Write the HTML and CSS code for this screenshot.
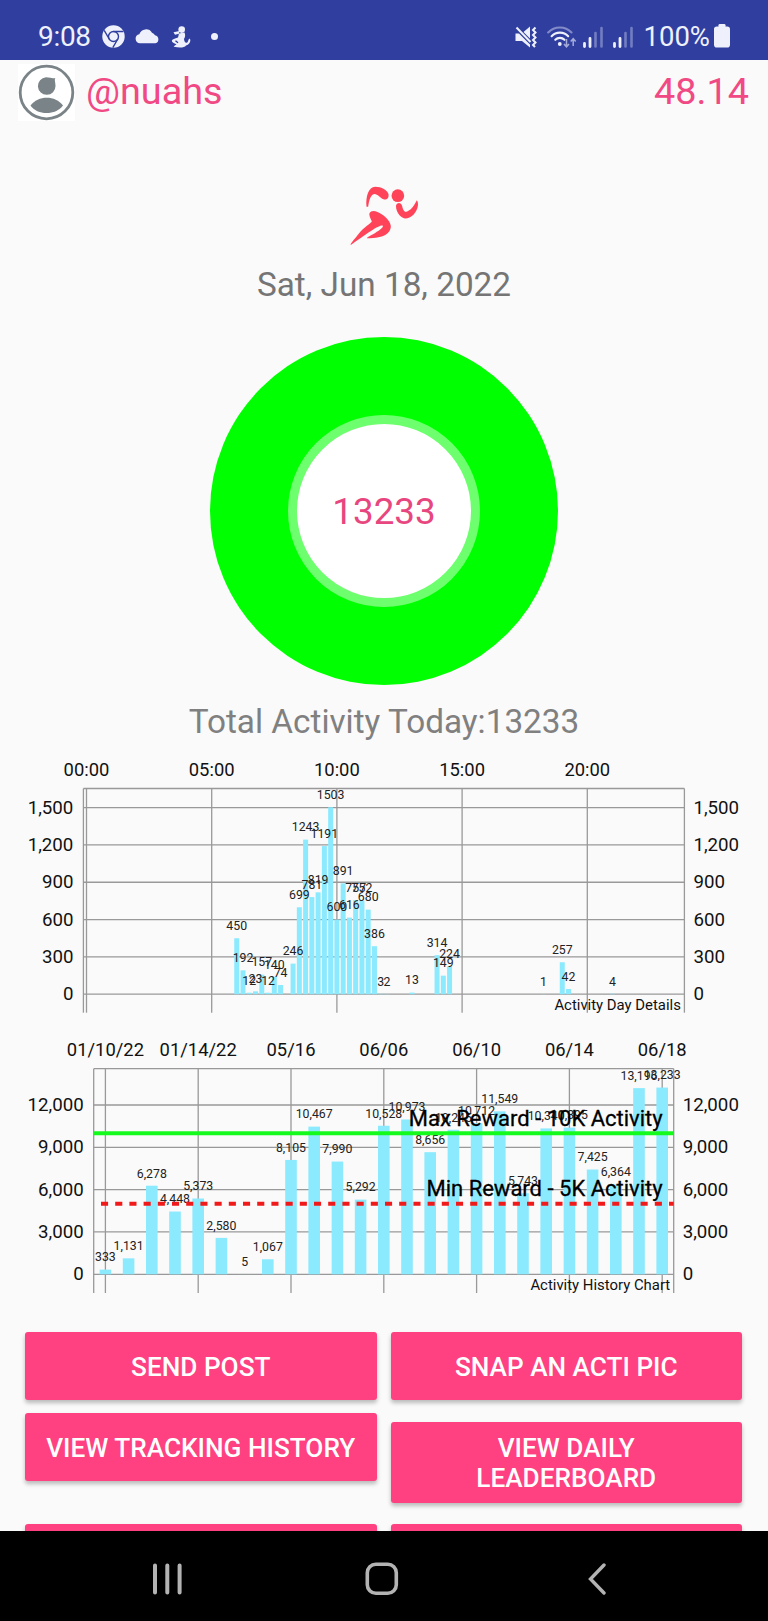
FILE: index.html
```
<!DOCTYPE html>
<html lang="en">
<head>
  <meta charset="UTF-8" />
  <meta name="viewport" content="width=device-width, initial-scale=1.0" />
  <title>Activity Tracker</title>
  <link rel="stylesheet" href="styles.css">
</head>
<body>

  <!-- Status bar -->
  <div class="status-bar">
    <div class="status-left">
      <span class="time">9:08</span>
      <svg class="chrome" width="23" height="23" viewBox="0 0 23 23">
        <circle cx="11.5" cy="11.5" r="11.2" fill="#eef1fb"/>
        <g fill="none" stroke="#303f9f" stroke-width="1.4">
          <circle cx="11.5" cy="11.5" r="5"/>
          <path d="M11.5 6.5H21.5M7.2 14L2.2 5.4M15.8 14L10.8 22.6"/>
        </g>
      </svg>
      <svg class="cloud" width="25" height="15" viewBox="0 0 25 15">
        <path d="M5 14.3A4.6 4.6 0 0 1 4.3 5.2A7 7 0 0 1 17 3.8A5.6 5.6 0 0 1 20 6.2A4.2 4.2 0 0 1 20.5 14.3Z" fill="#eef1fb"/>
      </svg>
      <svg class="fitness" width="20" height="22" viewBox="0 0 20 22">
        <g fill="#eef1fb">
          <circle cx="10.7" cy="3.6" r="3.3"/>
          <path d="M8 7.5L13.5 6.5C14.5 9 14.3 11 13 13C13.2 15.5 14.5 17.5 16.3 16.5C17.5 15.5 17 13 18.8 12.5C20.3 15 18.5 18.5 15 19.5C13.5 22 8 22 3 20.8C2 20 5 19.2 5.5 18.2C3 17.5 .8 16.2 .8 14.8C1 13.5 4 12.3 7 11.5Z"/>
          <path d="M2.5 6.2L8.5 5L8 7.8L4 8.8Z"/>
        </g>
        <path d="M4.5 14.7L7 16.8" stroke="#303f9f" stroke-width="1.4"/>
      </svg>
      <span class="dot"></span>
    </div>
    <div class="status-right">
      <svg class="mute" width="22" height="22" viewBox="0 0 22 22">
        <path d="M.5 7.5H4L15 18.5V21.5L7 15H.5ZM8.500 6L15 .5V12.5Z" fill="#eef1fb"/>
        <path d="M1.5 1.5L15.5 16" stroke="#eef1fb" stroke-width="2"/>
        <path d="M20.5 1.5L18 4L20.5 6.5L18 9L20.5 11.5L18 14L20.5 16.5L18 19L20 21" fill="none" stroke="#eef1fb" stroke-width="2"/>
      </svg>
      <svg class="wifi" width="30" height="22" viewBox="0 0 30 22">
        <g fill="none" stroke-width="2.1" stroke="#eef1fb" stroke-linecap="round">
          <path d="M1.2 6.5A16 16 0 0 1 24.5 6.5" stroke="#828bc8"/>
          <path d="M4.6 10.2A11.5 11.5 0 0 1 21.2 10.2"/>
          <path d="M8.3 13.8A6.5 6.5 0 0 1 17.5 13.8"/>
        </g>
        <circle cx="12.8" cy="18" r="1.9" fill="#eef1fb"/>
        <path d="M19.5 13V20.5M17 18L19.5 20.8L22 18M26.2 20V13M23.7 15.5L26.2 12.7L28.7 15.5" fill="none" stroke="#a4abd9" stroke-width="1.5"/>
      </svg>
      <svg class="signal" width="20" height="22" viewBox="0 0 20 22">
        <path d="M1.5 17.5V20.5M7 12.5V20.5" stroke="#eef1fb" stroke-width="2.8" stroke-linecap="round"/>
        <path d="M12.5 7V20.5M18.5 2V20.5" stroke="#737dc1" stroke-width="2.6" stroke-linecap="round"/>
      </svg>
      <svg class="signal" width="20" height="22" viewBox="0 0 20 22">
        <path d="M1.5 17.5V20.5M7 12.5V20.5" stroke="#eef1fb" stroke-width="2.8" stroke-linecap="round"/>
        <path d="M12.5 7V20.5M18.5 2V20.5" stroke="#737dc1" stroke-width="2.6" stroke-linecap="round"/>
      </svg>
      <span class="battery-text">100%</span>
      <svg class="battery" width="16" height="26" viewBox="0 0 16 26">
        <rect x="4.5" y="0" width="7" height="5" rx="1.2" fill="#eef1fb"/>
        <rect x="0" y="2.5" width="16" height="21" rx="2.8" fill="#eef1fb"/>
      </svg>
    </div>
  </div>

  <div class="container">
    <!-- User -->
    <div class="user-row">
      <svg class="avatar" width="57" height="57" viewBox="0 0 57 57">
        <rect width="57" height="57" fill="#fff"/>
        <circle cx="28.5" cy="28.5" r="26.3" fill="none" stroke="#7a8387" stroke-width="2.8"/>
        <path d="M37.5 14.3C36 15.5 37.5 18 37.5 22A8.8 8.8 0 1 1 28 13.3C31 13.5 35 14.5 37.5 14.3Z" fill="#7a8387"/>
        <path d="M12.5 41.5C20 31 37.5 31 45 41.5C38 51.5 19 51.5 12.5 41.5Z" fill="#7a8387"/>
      </svg>
      <span class="username">@nuahs</span>
      <span class="balance">48.14</span>
    </div>

    <svg class="runner" width="69" height="60" viewBox="330 48 206 180" fill="#ff4459">
      <path d="M379 110C376 80 385 50 405 50C425 50 441 60 445 72C447 86 438 91 430 88C420 84 412 71 402 72C391 75 387 90 384 110Z"/>
      <circle cx="473" cy="77" r="19"/>
      <path d="M468 105C472 96 483 97 486 108C487 115 490 124 496 126C510 124 522 108 530 91C538 100 532 125 515 138C503 148 488 148 478 136C471 127 466 115 468 105Z"/>
      <path d="M388 130C392 121 402 121 412 126C428 133 450 150 452 168C452 188 435 205 381 205C378 203 390 198 405 189C420 180 430 172 428 167C420 163 395 180 332 225C328 224 345 205 355 192C372 170 392 162 395 154C392 146 386 138 388 130Z"/>
    </svg>
    <div class="date">Sat, Jun 18, 2022</div>

    <div class="ring">
      <div class="hole">13233</div>
    </div>
    <div class="total">Total Activity Today:13233</div>

    <svg id="day" class="chart" width="768" height="270"></svg>
    <svg id="history" class="chart" width="768" height="270"></svg>

    <!-- Buttons -->
    <div class="buttons">
      <div class="button-row">
        <button>SEND POST</button>
        <button>SNAP AN ACTI PIC</button>
      </div>
      <div class="button-row">
        <button>VIEW TRACKING HISTORY</button>
        <button>VIEW DAILY<br>LEADERBOARD</button>
      </div>
      <div class="button-row">
        <button></button>
        <button></button>
      </div>
    </div>
  </div>

  <!-- Navigation bar -->
  <div class="nav-bar">
    <svg class="recents" width="30" height="32" viewBox="0 0 30 32">
      <path d="M2 2.5V29.5M14.3 2.5V29.5M26.6 2.5V29.5" stroke="#b3b3b3" stroke-width="4" stroke-linecap="round"/>
    </svg>
    <svg class="home" width="34" height="34" viewBox="0 0 34 34">
      <rect x="2.3" y="2.3" width="29" height="29" rx="8.5" fill="none" stroke="#b3b3b3" stroke-width="3.6"/>
    </svg>
    <svg class="back" width="18" height="32" viewBox="0 0 18 32">
      <path d="M16 2L2.5 16L16 30" fill="none" stroke="#b3b3b3" stroke-width="3.4" stroke-linecap="round"/>
    </svg>
  </div>

  <script src="charts.js"></script>
</body>
</html>
```
FILE: styles.css
```
body {
  font-family: Roboto, sans-serif;
  margin: 0;
  height: 1621px;
  display: flex;
  flex-direction: column;
  overflow: hidden;
  background-color: #fafafa;
}
svg {
  display: block;
  flex-shrink: 0;
}
.status-bar {
  height: 60px;
  flex-shrink: 0;
  box-sizing: border-box;
  padding: 13px 38px 0 38px;
  display: flex;
  justify-content: space-between;
  background-color: #303f9f;
  color: #eef1fb;
}
.status-left, .status-right {
  display: flex;
  align-items: center;
  height: 47px;
}
.time {
  font-size: 28px;
  letter-spacing: -0.3px;
  width: 64px;
}
.cloud {
  margin-left: 10px;
}
.fitness {
  margin-left: 11px;
}
.dot {
  width: 7px;
  height: 7px;
  border-radius: 50%;
  background-color: #eef1fb;
  margin-left: 20px;
}
.wifi {
  margin-left: 10px;
}
.signal {
  margin-left: 6px;
}
.signal + .signal {
  margin-left: 10px;
}
.battery-text {
  font-size: 27.5px;
  margin: 0 4px 0 10px;
}
.container {
  height: 1471px;
  flex-shrink: 0;
  overflow: hidden;
  display: flex;
  flex-direction: column;
  align-items: center;
}
.container > * {
  flex-shrink: 0;
}
.user-row {
  width: 768px;
  height: 64px;
  box-sizing: border-box;
  padding: 1px 19px 0 18px;
  display: flex;
  align-items: center;
  font-size: 37.8px;
  color: #f04983;
}
.username {
  margin-left: 11px;
  padding-bottom: 4px;
}
.balance {
  margin-left: auto;
  padding-bottom: 4px;
}
.runner {
  margin-top: 62px;
}
.date {
  font-size: 33.3px;
  line-height: 38px;
  margin-top: 20px;
  color: #757575;
}
.ring {
  width: 348px;
  height: 348px;
  margin-top: 33px;
  border-radius: 50%;
  background-color: #00ff00;
  display: flex;
  align-items: center;
  justify-content: center;
}
.hole {
  width: 174px;
  height: 174px;
  line-height: 175px;
  border: 9px solid #6eff6e;
  border-radius: 50%;
  background-color: #fff;
  text-align: center;
  font-size: 36.8px;
  color: #e8467e;
}
.total {
  font-size: 33.3px;
  line-height: 38px;
  margin-top: 18px;
  color: #808080;
}
.chart {
  margin-top: 10px;
}
#day {
  margin-top: 9px;
}
.grid {
  stroke: #999;
  stroke-width: 1.3;
}
.bar {
  fill: #8ceaff;
}
.axis {
  font-size: 18.4px;
  fill: #111;
}
.tick {
  font-size: 18.7px;
}
.value {
  font-size: 12.3px;
  fill: #222;
}
.description {
  font-size: 14.9px;
  fill: #111;
}
.limit {
  font-size: 22px;
  fill: #000;
  stroke: #000;
  stroke-width: 0.3;
}
.max-line {
  stroke: #14fa1c;
  stroke-width: 4;
}
.min-line {
  stroke: #f01a1a;
  stroke-width: 4;
  stroke-dasharray: 7.1 7.1;
}
.middle {
  text-anchor: middle;
}
.end {
  text-anchor: end;
}
.buttons {
  width: 717px;
  margin: 32px 1px 0 0;
}
.button-row {
  display: flex;
  align-items: baseline;
  gap: 14px;
  margin-bottom: 13px;
}
.button-row:nth-child(2) {
  margin-bottom: 21px;
}
button {
  flex: 1 1 0;
  min-height: 68px;
  padding: 11px 0 9px;
  border: none;
  border-radius: 3px;
  background-color: #ff4081;
  color: #fff;
  font-family: Roboto, sans-serif;
  font-size: 26.2px;
  font-weight: 500;
  line-height: 30.5px;
  box-shadow: 0 3px 4px rgba(0, 0, 0, 0.26);
}
.nav-bar {
  height: 90px;
  flex-shrink: 0;
  box-sizing: border-box;
  background-color: #000;
  display: flex;
  align-items: center;
  padding: 5px 0 0 153px;
}
.home {
  margin-left: 182px;
}
.back {
  margin-left: 189px;
}
```
FILE: charts.js
```
const day = {
  id: "day",
  left: 83.4, right: 684.4, top: 38.5, bottom: 262.7, zero: 244.2,
  first: 86.5, step: 6.26, barWidth: 5, unit: 0.12437,
  ticks: [0, 300, 600, 900, 1200, 1500],
  labels: { 0: "00:00", 20: "05:00", 40: "10:00", 60: "15:00", 80: "20:00" },
  values: {
    24: 450, 25: 192, 26: 12, 27: 23, 28: 157, 29: 12, 30: 140, 31: 74,
    33: 246, 34: 699, 35: 1243, 36: 781, 37: 819, 38: 1191, 39: 1503,
    40: 600, 41: 891, 42: 616, 43: 757, 44: 752, 45: 680, 46: 386, 47: 3, 48: 2,
    52: 13, 56: 314, 57: 149, 58: 224, 73: 1, 76: 257, 77: 42, 84: 4
  },
  format: (v) => v,
  description: "Activity Day Details"
}

const history1 = {
  id: "history",
  left: 93.7, right: 673.7, top: 38.7, bottom: 263, zero: 244.3,
  first: 105.4, step: 23.2, barWidth: 11.6, unit: 0.01411,
  ticks: [0, 3000, 6000, 9000, 12000],
  labels: { 0: "01/10/22", 4: "01/14/22", 8: "05/16", 12: "06/06", 16: "06/10", 20: "06/14", 24: "06/18" },
  values: Object.assign({}, [
    333, 1131, 6278, 4448, 5373, 2580, 5, 1067, 8105, 10467, 7990, 5292, 10528,
    10973, 8656, 10245, 10712, 11549, 5743, 10340, 10395, 7425, 6364, 13196, 13233
  ]),
  format: (v) => v.toLocaleString("en-US"),
  description: "Activity History Chart",
  limits: [
    { value: 10000, text: "Max Reward - 10K Activity", cls: "max-line", start: 0 },
    { value: 5000, text: "Min Reward - 5K Activity", cls: "min-line", start: 7.3 }
  ]
}

function line(x1, y1, x2, y2, cls) {
  return `<line x1="${x1}" y1="${y1}" x2="${x2}" y2="${y2}" class="${cls}"/>`
}

function text(x, y, cls, str) {
  return `<text x="${x}" y="${y}" class="${cls}">${str}</text>`
}

function draw(c) {
  let out = line(c.left, c.top, c.right, c.top, "grid")
  out += line(c.left, c.top, c.left, c.bottom, "grid")
  out += line(c.right, c.top, c.right, c.bottom, "grid")

  c.ticks.forEach((t) => {
    let y = c.zero - t * c.unit
    let str = t.toLocaleString("en-US")
    out += line(c.left, y, c.right, y, "grid")
    out += text(c.left - 10, y + 6, "axis tick end", str)
    out += text(c.right + 9, y + 6, "axis tick", str)
  })

  for (let i in c.labels) {
    let x = c.first + i * c.step
    out += line(x, c.top, x, c.bottom, "grid")
    out += text(x, c.top - 12.4, "axis middle", c.labels[i])
  }

  // bars first, values on top of them
  for (let i in c.values) {
    let h = c.values[i] * c.unit
    out += `<rect x="${c.first + i * c.step - c.barWidth / 2}" y="${c.zero - h}" width="${c.barWidth}" height="${h}" class="bar"/>`
  }
  for (let i in c.values) {
    out += text(c.first + i * c.step, c.zero - c.values[i] * c.unit - 8.2, "value middle", c.format(c.values[i]))
  }

  (c.limits || []).forEach((l) => {
    let y = c.zero - l.value * c.unit
    out += line(c.left + l.start, y, c.right, y, l.cls)
    out += text(c.right - 11, y - 7.5, "limit end", l.text)
  })

  out += text(c.right - 3.5, c.bottom - 2.8, "description end", c.description)
  document.getElementById(c.id).innerHTML = out
}

draw(day)
draw(history1)
```
